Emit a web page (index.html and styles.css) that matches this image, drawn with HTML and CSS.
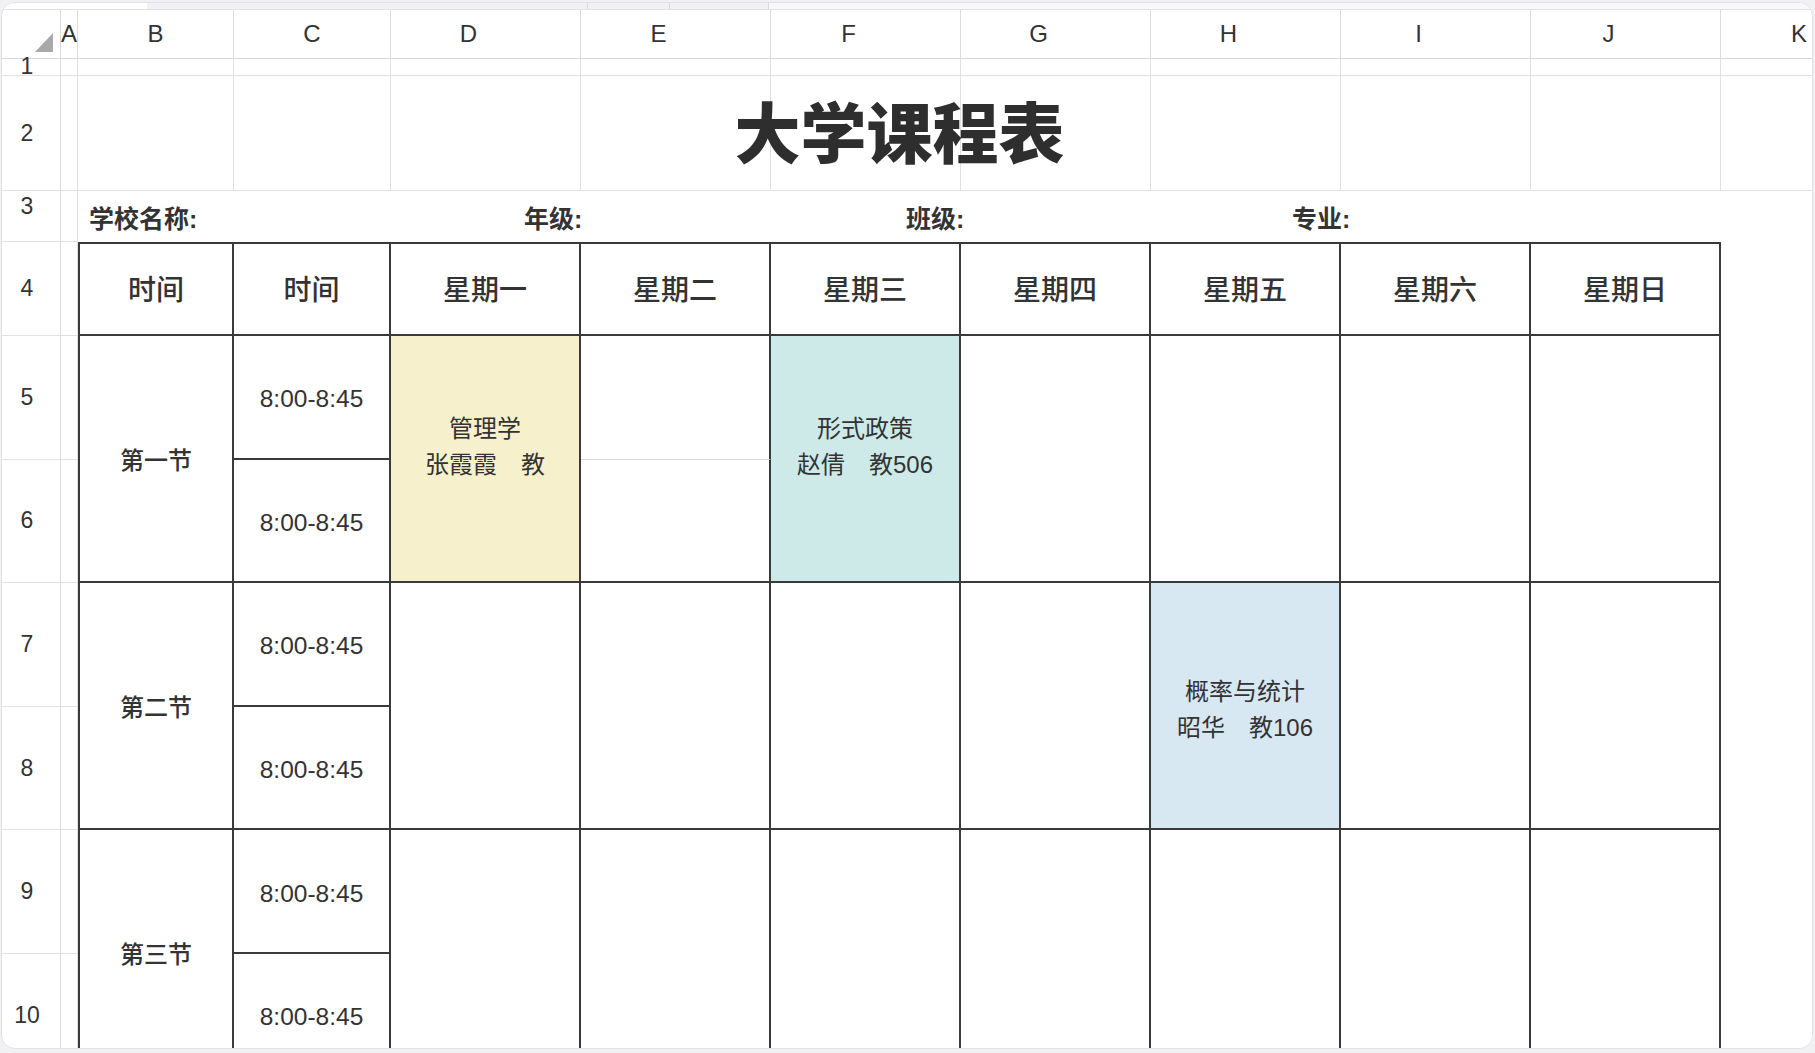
FILE: index.html
```html
<!DOCTYPE html>
<html lang="zh-CN">
<head>
<meta charset="utf-8">
<title>大学课程表</title>
<link rel="stylesheet" href="styles.css">
</head>
<body>
<div class="page">
  <div class="card">
    <div class="tabs">
      <div class="tab-blank"></div>
      <div class="tab t1"></div>
      <div class="tab t2"></div>
      <div class="tab t3"></div>
      <div class="tab-rest"></div>
    </div>
    <div class="sheet">
      <!-- column headers -->
      <div class="corner"><span class="tri"></span></div>
      <div class="colh">A</div>
      <div class="colh">B</div>
      <div class="colh">C</div>
      <div class="colh off">D</div>
      <div class="colh off">E</div>
      <div class="colh off">F</div>
      <div class="colh off">G</div>
      <div class="colh off">H</div>
      <div class="colh off">I</div>
      <div class="colh off">J</div>
      <div class="colh colh-k">K</div>

      <!-- row 1 -->
      <div class="rowh r1">1</div>
      <div class="c"></div><div class="c"></div><div class="c"></div><div class="c"></div><div class="c"></div><div class="c"></div>
      <div class="c"></div><div class="c"></div><div class="c"></div><div class="c"></div><div class="c"></div>

      <!-- row 2 -->
      <div class="rowh">2</div>
      <div class="c"></div>
      <div class="c title-cell"><div class="title">大学课程表</div></div>
      <div class="c"></div><div class="c"></div><div class="c"></div><div class="c"></div><div class="c"></div>
      <div class="c"></div><div class="c"></div><div class="c"></div><div class="c"></div>

      <!-- row 3 -->
      <div class="rowh r3">3</div>
      <div class="c"></div>
      <div class="info span2 i-school">学校名称:</div>
      <div class="info span2 i-grade">年级:</div>
      <div class="info span2 i-class">班级:</div>
      <div class="info span2 i-major">专业:</div>
      <div class="info"></div>
      <div class="blank"></div>

      <!-- row 4 -->
      <div class="rowh">4</div>
      <div class="c"></div>
      <div class="t th first">时间</div>
      <div class="t th">时间</div>
      <div class="t th">星期一</div>
      <div class="t th">星期二</div>
      <div class="t th">星期三</div>
      <div class="t th">星期四</div>
      <div class="t th">星期五</div>
      <div class="t th">星期六</div>
      <div class="t th">星期日</div>
      <div class="blank"></div>

      <!-- row 5 -->
      <div class="rowh">5</div>
      <div class="c"></div>
      <div class="t first sec rs2">第一节</div>
      <div class="t slot">8:00-8:45</div>
      <div class="t rs2 course up yellow"><span>管理学</span><span>张霞霞　教</span></div>
      <div class="t soft"></div>
      <div class="t rs2 course up teal"><span>形式政策</span><span>赵倩　教506</span></div>
      <div class="t rs2"></div>
      <div class="t rs2"></div>
      <div class="t rs2"></div>
      <div class="t rs2"></div>
      <div class="blank"></div>

      <!-- row 6 -->
      <div class="rowh">6</div>
      <div class="c"></div>
      <div class="t slot">8:00-8:45</div>
      <div class="t"></div>
      <div class="blank"></div>

      <!-- row 7 -->
      <div class="rowh">7</div>
      <div class="c"></div>
      <div class="t first sec rs2">第二节</div>
      <div class="t slot">8:00-8:45</div>
      <div class="t rs2"></div>
      <div class="t rs2"></div>
      <div class="t rs2"></div>
      <div class="t rs2"></div>
      <div class="t rs2 course down blue"><span>概率与统计</span><span>昭华　教106</span></div>
      <div class="t rs2"></div>
      <div class="t rs2"></div>
      <div class="blank"></div>

      <!-- row 8 -->
      <div class="rowh">8</div>
      <div class="c"></div>
      <div class="t slot">8:00-8:45</div>
      <div class="blank"></div>

      <!-- row 9 -->
      <div class="rowh">9</div>
      <div class="c"></div>
      <div class="t first sec rs2">第三节</div>
      <div class="t slot">8:00-8:45</div>
      <div class="t rs2"></div>
      <div class="t rs2"></div>
      <div class="t rs2"></div>
      <div class="t rs2"></div>
      <div class="t rs2"></div>
      <div class="t rs2"></div>
      <div class="t rs2"></div>
      <div class="blank"></div>

      <!-- row 10 -->
      <div class="rowh">10</div>
      <div class="c"></div>
      <div class="t slot">8:00-8:45</div>
      <div class="blank"></div>
    </div>
  </div>
</div>
</body>
</html>
```

FILE: styles.css
```css
* {
  box-sizing: border-box;
  margin: 0;
  padding: 0;
}

html,
body {
  width: 1815px;
  height: 1053px;
  overflow: hidden;
}

body {
  background: #f1f1f3;
  font-family: "Liberation Sans", "Noto Sans CJK SC", sans-serif;
  color: #333;
}

.page {
  height: 1053px;
  padding: 2px 2px 4px 1px;
}

.card {
  height: 1047px;
  background: #fff;
  border: 1px solid #e2e2e6;
  border-radius: 14px;
  overflow: hidden;
  display: flex;
  flex-direction: column;
}

/* top tab strip */
.tabs {
  flex: none;
  height: 7px;
  display: flex;
  border-bottom: 1px solid #e2e2e6;
}

.tab-blank {
  width: 145px;
  background: #fff;
}

.tab {
  background: #f1f1f5;
  border-right: 1px solid #d9d9df;
}

.t1 { width: 441px; }
.t2 { width: 82px; }
.t3 { width: 99px; }

.tab-rest {
  flex: 1;
  background: #f8f8fa;
}

/* spreadsheet grid */
.sheet {
  flex: none;
  display: grid;
  grid-template-columns: 59px 17px 156px 157px repeat(7, 190px) 158px;
  grid-template-rows: 49px 17px 115px 51px 94px repeat(6, 123.6px);
}

.corner {
  display: flex;
  align-items: flex-end;
  justify-content: flex-end;
  padding: 0 7px 6px 0;
  border-right: 1px solid #dcdcdc;
  border-bottom: 1px solid #d8d8d8;
}

.tri {
  width: 0;
  height: 0;
  border-left: 18px solid transparent;
  border-bottom: 19px solid #a9a9a9;
}

.colh {
  display: flex;
  align-items: center;
  justify-content: center;
  font-size: 24px;
  color: #333;
  white-space: nowrap;
  border-right: 1px solid #dcdcdc;
  border-bottom: 1px solid #d8d8d8;
}

.colh.off {
  padding-right: 34px;
}

.colh-k {
  justify-content: flex-start;
  padding-left: 70px;
}

.rowh {
  display: flex;
  align-items: center;
  justify-content: center;
  padding-right: 8px;
  font-size: 23px;
  color: #333;
  border-right: 1px solid #dcdcdc;
  border-bottom: 1px solid #e2e2e2;
}

.rowh.r1 {
  align-items: flex-end;
  line-height: 17px;
}

.rowh.r3 {
  padding-bottom: 20px;
}

.c {
  border-right: 1px solid #e0e0e0;
  border-bottom: 1px solid #e0e0e0;
}

.title-cell {
  position: relative;
}

.title {
  position: absolute;
  left: 0;
  top: 0;
  width: 1643px;
  height: 100%;
  padding-bottom: 9px;
  display: flex;
  align-items: center;
  justify-content: center;
  font-family: "Noto Sans CJK SC", sans-serif;
  font-size: 66px;
  font-weight: 900;
  color: #2e2e2e;
  z-index: 2;
}

/* row 3 info labels */
.info {
  display: flex;
  align-items: center;
  font-size: 25px;
  font-weight: 700;
  white-space: nowrap;
  color: #333;
}

.span2 {
  grid-column: span 2;
}

.i-school { padding-left: 11px; }
.i-grade { padding-left: 133px; }
.i-class { padding-left: 135px; }
.i-major { padding-left: 141px; }

.blank {
  background: #fff;
}

/* bordered timetable */
.t {
  display: flex;
  align-items: center;
  justify-content: center;
  font-size: 24px;
  color: #333;
  border-right: 2px solid #3a3a3a;
  border-bottom: 2px solid #3a3a3a;
}

.t.first {
  border-left: 2px solid #3a3a3a;
}

.th {
  border-top: 2px solid #3a3a3a;
  padding-bottom: 3px;
  font-size: 28px;
  font-weight: 500;
}

.rs2 {
  grid-row: span 2;
}

.sec {
  font-weight: 500;
}

.slot {
  font-size: 24.5px;
  padding-top: 5px;
}

.soft {
  border-bottom: 1px solid #dcdcdc;
}

.course {
  flex-direction: column;
  line-height: 36px;
  white-space: nowrap;
}

.course.up {
  padding-bottom: 23px;
}

.course.down {
  padding-top: 8px;
}

.yellow { background: #f6f0cc; }
.teal { background: #cdeae9; }
.blue { background: #d8e8f3; }
```
